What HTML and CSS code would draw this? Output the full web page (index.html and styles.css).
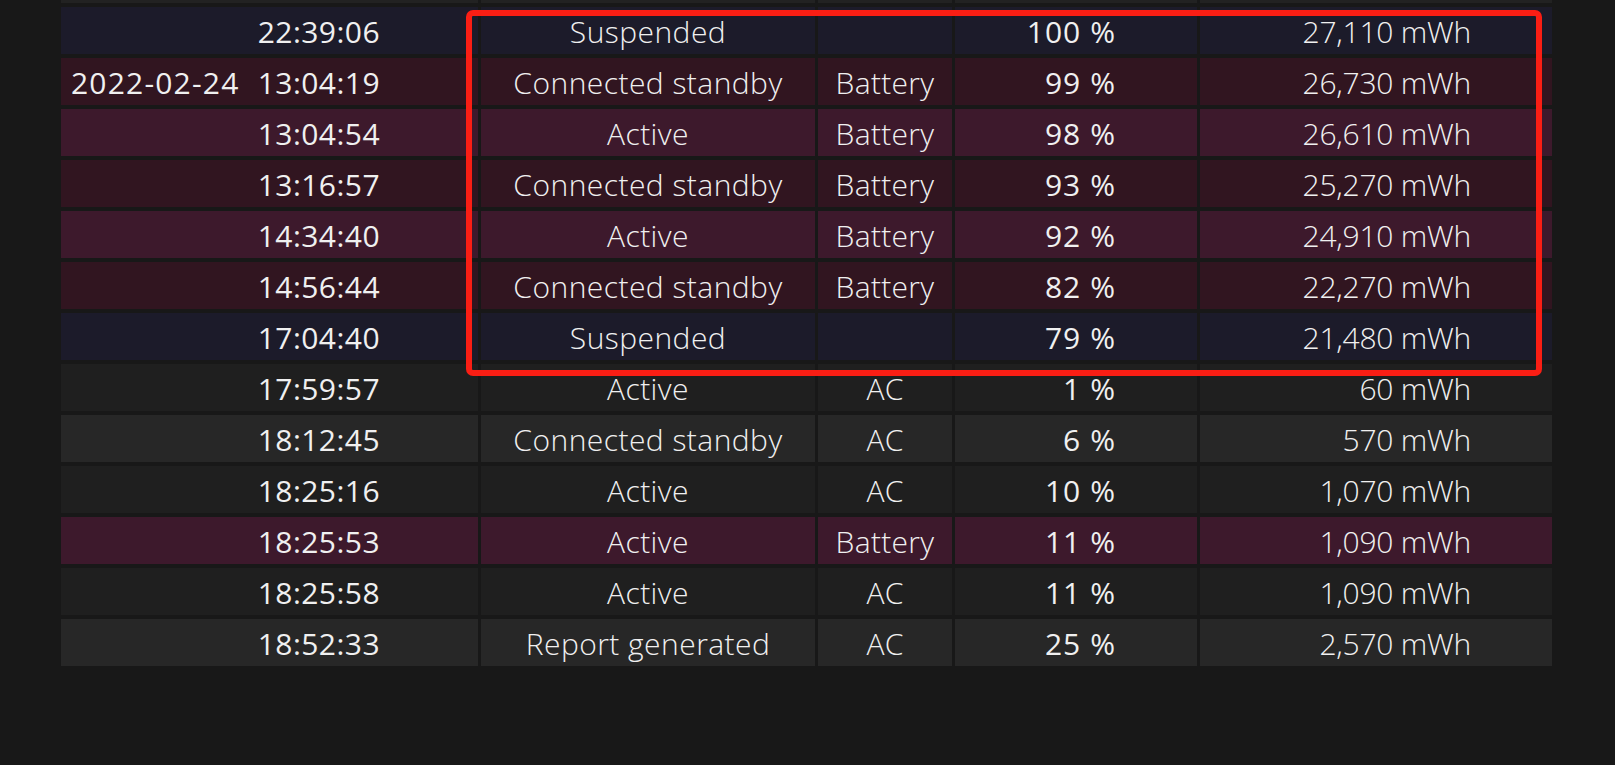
FILE: index.html
```html
<!DOCTYPE html>
<html lang="en">
<head>
<meta charset="utf-8">
<title>Battery report – Recent usage</title>
<link rel="stylesheet" href="styles.css">
</head>
<body>
<div class="report">
  <div class="usage">
    <div class="row edge"><div class="cell"></div><div class="cell"></div><div class="cell"></div><div class="cell"></div><div class="cell"></div></div>

    <div class="row suspend"><div class="cell datetime"><span class="date"></span><span class="time">22:39:06</span></div><div class="cell state">Suspended</div><div class="cell source"></div><div class="cell percent">100 %</div><div class="cell mw">27,110 mWh</div></div>
    <div class="row odd batt"><div class="cell datetime"><span class="date">2022-02-24</span><span class="time">13:04:19</span></div><div class="cell state">Connected standby</div><div class="cell source">Battery</div><div class="cell percent">99 %</div><div class="cell mw">26,730 mWh</div></div>
    <div class="row even batt"><div class="cell datetime"><span class="date"></span><span class="time">13:04:54</span></div><div class="cell state">Active</div><div class="cell source">Battery</div><div class="cell percent">98 %</div><div class="cell mw">26,610 mWh</div></div>
    <div class="row odd batt"><div class="cell datetime"><span class="date"></span><span class="time">13:16:57</span></div><div class="cell state">Connected standby</div><div class="cell source">Battery</div><div class="cell percent">93 %</div><div class="cell mw">25,270 mWh</div></div>
    <div class="row even batt"><div class="cell datetime"><span class="date"></span><span class="time">14:34:40</span></div><div class="cell state">Active</div><div class="cell source">Battery</div><div class="cell percent">92 %</div><div class="cell mw">24,910 mWh</div></div>
    <div class="row odd batt"><div class="cell datetime"><span class="date"></span><span class="time">14:56:44</span></div><div class="cell state">Connected standby</div><div class="cell source">Battery</div><div class="cell percent">82 %</div><div class="cell mw">22,270 mWh</div></div>
    <div class="row suspend"><div class="cell datetime"><span class="date"></span><span class="time">17:04:40</span></div><div class="cell state">Suspended</div><div class="cell source"></div><div class="cell percent">79 %</div><div class="cell mw">21,480 mWh</div></div>
    <div class="row odd"><div class="cell datetime"><span class="date"></span><span class="time">17:59:57</span></div><div class="cell state">Active</div><div class="cell source">AC</div><div class="cell percent">1 %</div><div class="cell mw">60 mWh</div></div>
    <div class="row even"><div class="cell datetime"><span class="date"></span><span class="time">18:12:45</span></div><div class="cell state">Connected standby</div><div class="cell source">AC</div><div class="cell percent">6 %</div><div class="cell mw">570 mWh</div></div>
    <div class="row odd"><div class="cell datetime"><span class="date"></span><span class="time">18:25:16</span></div><div class="cell state">Active</div><div class="cell source">AC</div><div class="cell percent">10 %</div><div class="cell mw">1,070 mWh</div></div>
    <div class="row even batt"><div class="cell datetime"><span class="date"></span><span class="time">18:25:53</span></div><div class="cell state">Active</div><div class="cell source">Battery</div><div class="cell percent">11 %</div><div class="cell mw">1,090 mWh</div></div>
    <div class="row odd"><div class="cell datetime"><span class="date"></span><span class="time">18:25:58</span></div><div class="cell state">Active</div><div class="cell source">AC</div><div class="cell percent">11 %</div><div class="cell mw">1,090 mWh</div></div>
    <div class="row even"><div class="cell datetime"><span class="date"></span><span class="time">18:52:33</span></div><div class="cell state">Report generated</div><div class="cell source">AC</div><div class="cell percent">25 %</div><div class="cell mw">2,570 mWh</div></div>
  </div>
  <div class="highlight" aria-hidden="true"></div>
</div>
</body>
</html>
```

FILE: styles.css
```css
html, body {
  margin: 0;
  padding: 0;
}

body {
  background: #181818;
  color: #f0f0f0;
  font-family: "Open Sans", "Noto Sans", sans-serif;
  font-weight: 300;
  font-size: 30px;
  letter-spacing: 0.01em;
  width: 1615px;
  height: 765px;
  overflow: hidden;
}

.report {
  position: relative;
  padding-left: 61px;
}

.usage {
  display: flex;
  flex-direction: column;
  gap: 4px;
  width: 1491px;
}

.row {
  display: grid;
  grid-template-columns: 417px 334px 134px 242px 352px;
  column-gap: 3px;
  height: 47px;
}

.row.edge {
  height: 3px;
}

.row.edge .cell {
  background: #222222;
}

.cell {
  box-sizing: border-box;
  height: 100%;
  padding-top: 3px;
  line-height: 44px;
  white-space: nowrap;
  overflow: hidden;
}

.row.odd .cell { background: #1f1f1f; }
.row.even .cell { background: #272727; }
.row.suspend .cell { background: #1c1b2a; }
.row.odd.batt .cell { background: #311520; }
.row.even.batt .cell { background: #3d192c; }

.datetime {
  display: flex;
  padding-left: 10px;
  padding-right: 98px;
  font-weight: 400;
}

.datetime .date {
  letter-spacing: 0.04em;
}

.datetime .time {
  margin-left: auto;
  letter-spacing: 0.015em;
}

.state,
.source {
  text-align: center;
}

.state {
  letter-spacing: 0.015em;
}

.percent {
  text-align: right;
  padding-right: 81px;
  font-weight: 400;
  letter-spacing: 0.035em;
}

.mw {
  text-align: right;
  padding-right: 81px;
  letter-spacing: -0.008em;
}

.highlight {
  position: absolute;
  left: 466px;
  top: 10px;
  width: 1076px;
  height: 366px;
  box-sizing: border-box;
  border: 6px solid #fa1e14;
  border-radius: 7px;
  pointer-events: none;
}
```
